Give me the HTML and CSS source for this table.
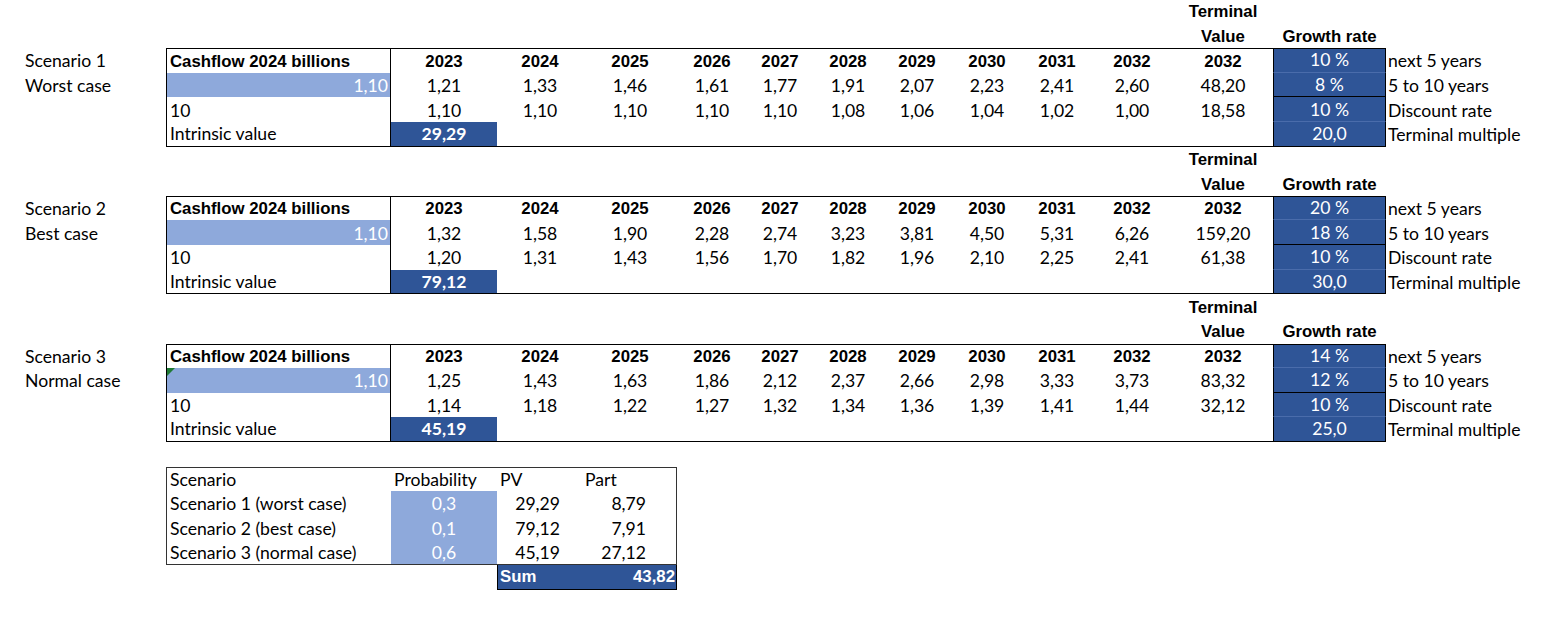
FILE: index.html
```html
<!DOCTYPE html>
<html>
<head>
<meta charset="utf-8">
<link rel="stylesheet" href="styles.css">
</head>
<body>
<div class="sheet">

  <!-- Scenario 1 -->
  <div class="row"><div class="c h ctr col-m">Terminal</div></div>
  <div class="row"><div class="c h ctr col-m">Value</div><div class="c h ctr">Growth rate</div></div>
  <div class="row">
    <div class="c lab">Scenario 1</div>
    <div class="c h pl top bl br">Cashflow 2024 billions</div>
    <div class="c h ctr top">2023</div><div class="c h ctr top">2024</div><div class="c h ctr top">2025</div><div class="c h ctr top">2026</div><div class="c h ctr top">2027</div><div class="c h ctr top">2028</div><div class="c h ctr top">2029</div><div class="c h ctr top">2030</div><div class="c h ctr top">2031</div><div class="c h ctr top">2032</div><div class="c h ctr top">2032</div>
    <div class="c ctr dark top bl br sep">10 %</div>
    <div class="c note">next 5 years</div>
  </div>
  <div class="row">
    <div class="c lab">Worst case</div>
    <div class="c rt light bl br">1,10</div>
    <div class="c ctr">1,21</div><div class="c ctr">1,33</div><div class="c ctr">1,46</div><div class="c ctr">1,61</div><div class="c ctr">1,77</div><div class="c ctr">1,91</div><div class="c ctr">2,07</div><div class="c ctr">2,23</div><div class="c ctr">2,41</div><div class="c ctr">2,60</div><div class="c ctr">48,20</div>
    <div class="c ctr dark bl br bot">8 %</div>
    <div class="c note">5 to 10 years</div>
  </div>
  <div class="row">
    <div class="c"></div>
    <div class="c pl bl br">10</div>
    <div class="c ctr">1,10</div><div class="c ctr">1,10</div><div class="c ctr">1,10</div><div class="c ctr">1,10</div><div class="c ctr">1,10</div><div class="c ctr">1,08</div><div class="c ctr">1,06</div><div class="c ctr">1,04</div><div class="c ctr">1,02</div><div class="c ctr">1,00</div><div class="c ctr">18,58</div>
    <div class="c ctr dark bl br sep">10 %</div>
    <div class="c note">Discount rate</div>
  </div>
  <div class="row">
    <div class="c"></div>
    <div class="c pl bl br bot">Intrinsic value</div>
    <div class="c ctr dark b bot">29,29</div>
    <div class="c bot"></div><div class="c bot"></div><div class="c bot"></div><div class="c bot"></div><div class="c bot"></div><div class="c bot"></div><div class="c bot"></div><div class="c bot"></div><div class="c bot"></div><div class="c bot"></div>
    <div class="c ctr dark bl br bot">20,0</div>
    <div class="c note">Terminal multiple</div>
  </div>

  <!-- Scenario 2 -->
  <div class="row"><div class="c h ctr col-m">Terminal</div></div>
  <div class="row"><div class="c h ctr col-m">Value</div><div class="c h ctr">Growth rate</div></div>
  <div class="row">
    <div class="c lab">Scenario 2</div>
    <div class="c h pl top bl br">Cashflow 2024 billions</div>
    <div class="c h ctr top">2023</div><div class="c h ctr top">2024</div><div class="c h ctr top">2025</div><div class="c h ctr top">2026</div><div class="c h ctr top">2027</div><div class="c h ctr top">2028</div><div class="c h ctr top">2029</div><div class="c h ctr top">2030</div><div class="c h ctr top">2031</div><div class="c h ctr top">2032</div><div class="c h ctr top">2032</div>
    <div class="c ctr dark top bl br sep">20 %</div>
    <div class="c note">next 5 years</div>
  </div>
  <div class="row">
    <div class="c lab">Best case</div>
    <div class="c rt light bl br">1,10</div>
    <div class="c ctr">1,32</div><div class="c ctr">1,58</div><div class="c ctr">1,90</div><div class="c ctr">2,28</div><div class="c ctr">2,74</div><div class="c ctr">3,23</div><div class="c ctr">3,81</div><div class="c ctr">4,50</div><div class="c ctr">5,31</div><div class="c ctr">6,26</div><div class="c ctr">159,20</div>
    <div class="c ctr dark bl br bot">18 %</div>
    <div class="c note">5 to 10 years</div>
  </div>
  <div class="row">
    <div class="c"></div>
    <div class="c pl bl br">10</div>
    <div class="c ctr">1,20</div><div class="c ctr">1,31</div><div class="c ctr">1,43</div><div class="c ctr">1,56</div><div class="c ctr">1,70</div><div class="c ctr">1,82</div><div class="c ctr">1,96</div><div class="c ctr">2,10</div><div class="c ctr">2,25</div><div class="c ctr">2,41</div><div class="c ctr">61,38</div>
    <div class="c ctr dark bl br sep">10 %</div>
    <div class="c note">Discount rate</div>
  </div>
  <div class="row">
    <div class="c"></div>
    <div class="c pl bl br bot">Intrinsic value</div>
    <div class="c ctr dark b bot">79,12</div>
    <div class="c bot"></div><div class="c bot"></div><div class="c bot"></div><div class="c bot"></div><div class="c bot"></div><div class="c bot"></div><div class="c bot"></div><div class="c bot"></div><div class="c bot"></div><div class="c bot"></div>
    <div class="c ctr dark bl br bot">30,0</div>
    <div class="c note">Terminal multiple</div>
  </div>

  <!-- Scenario 3 -->
  <div class="row"><div class="c h ctr col-m">Terminal</div></div>
  <div class="row"><div class="c h ctr col-m">Value</div><div class="c h ctr">Growth rate</div></div>
  <div class="row">
    <div class="c lab">Scenario 3</div>
    <div class="c h pl top bl br">Cashflow 2024 billions</div>
    <div class="c h ctr top">2023</div><div class="c h ctr top">2024</div><div class="c h ctr top">2025</div><div class="c h ctr top">2026</div><div class="c h ctr top">2027</div><div class="c h ctr top">2028</div><div class="c h ctr top">2029</div><div class="c h ctr top">2030</div><div class="c h ctr top">2031</div><div class="c h ctr top">2032</div><div class="c h ctr top">2032</div>
    <div class="c ctr dark top bl br sep">14 %</div>
    <div class="c note">next 5 years</div>
  </div>
  <div class="row">
    <div class="c lab">Normal case</div>
    <div class="c rt light bl br flag">1,10</div>
    <div class="c ctr">1,25</div><div class="c ctr">1,43</div><div class="c ctr">1,63</div><div class="c ctr">1,86</div><div class="c ctr">2,12</div><div class="c ctr">2,37</div><div class="c ctr">2,66</div><div class="c ctr">2,98</div><div class="c ctr">3,33</div><div class="c ctr">3,73</div><div class="c ctr">83,32</div>
    <div class="c ctr dark bl br bot">12 %</div>
    <div class="c note">5 to 10 years</div>
  </div>
  <div class="row">
    <div class="c"></div>
    <div class="c pl bl br">10</div>
    <div class="c ctr">1,14</div><div class="c ctr">1,18</div><div class="c ctr">1,22</div><div class="c ctr">1,27</div><div class="c ctr">1,32</div><div class="c ctr">1,34</div><div class="c ctr">1,36</div><div class="c ctr">1,39</div><div class="c ctr">1,41</div><div class="c ctr">1,44</div><div class="c ctr">32,12</div>
    <div class="c ctr dark bl br sep">10 %</div>
    <div class="c note">Discount rate</div>
  </div>
  <div class="row">
    <div class="c"></div>
    <div class="c pl bl br bot">Intrinsic value</div>
    <div class="c ctr dark b bot">45,19</div>
    <div class="c bot"></div><div class="c bot"></div><div class="c bot"></div><div class="c bot"></div><div class="c bot"></div><div class="c bot"></div><div class="c bot"></div><div class="c bot"></div><div class="c bot"></div><div class="c bot"></div>
    <div class="c ctr dark bl br bot">25,0</div>
    <div class="c note">Terminal multiple</div>
  </div>

  <!-- Summary -->
  <div class="row"></div>
  <div class="row">
    <div class="c"></div>
    <div class="c pl stop sleft">Scenario</div>
    <div class="c pl stop">Probability</div>
    <div class="c pv-h stop">PV</div>
    <div class="c part-h stop sright">Part</div>
  </div>
  <div class="row">
    <div class="c"></div>
    <div class="c pl sleft">Scenario 1 (worst case)</div>
    <div class="c ctr light">0,3</div>
    <div class="c rt pv">29,29</div>
    <div class="c rt part sright">8,79</div>
  </div>
  <div class="row">
    <div class="c"></div>
    <div class="c pl sleft">Scenario 2 (best case)</div>
    <div class="c ctr light">0,1</div>
    <div class="c rt pv">79,12</div>
    <div class="c rt part sright">7,91</div>
  </div>
  <div class="row">
    <div class="c"></div>
    <div class="c pl sleft sbot">Scenario 3 (normal case)</div>
    <div class="c ctr light sbot">0,6</div>
    <div class="c rt pv sbot">45,19</div>
    <div class="c rt part sright sbot">27,12</div>
  </div>
  <div class="row">
    <div class="c"></div>
    <div class="c"></div>
    <div class="c"></div>
    <div class="c h dark sum-l bl bot">Sum</div>
    <div class="c h rt dark sum-r br bot">43,82</div>
  </div>
</div>
</body>
</html>
```

FILE: styles.css
```css
html, body {
  margin: 0;
  padding: 0;
  background: #ffffff;
}

.sheet {
  margin-top: -1px;
  font-family: Lato, "Liberation Sans", sans-serif;
  font-size: 17.6px;
  color: #000000;
}

.row {
  display: grid;
  grid-template-columns: 166px 225px 106px 86px 94px 70px 66px 70px 68px 72px 68px 82px 100px 113px 1fr;
  height: 24.62px;
}

.c {
  box-sizing: border-box;
  display: flex;
  align-items: flex-end;
  justify-content: flex-start;
  white-space: nowrap;
  min-width: 0;
  padding-bottom: 1.5px;
  line-height: normal;
  position: relative;
}

.h {
  font-family: "Liberation Sans", Arial, sans-serif;
  font-weight: bold;
  font-size: 16.8px;
  padding-bottom: 1.2px;
}

.b {
  font-weight: bold;
}

.col-m {
  grid-column: 13;
}

.ctr {
  justify-content: center;
}

.rt {
  justify-content: flex-end;
  padding-right: 2px;
}

.pl {
  padding-left: 3px;
}

.lab {
  padding-left: 25px;
}

.note {
  padding-left: 2px;
}

.light {
  background: #8ea9db;
  color: #ffffff;
}

.dark {
  background: #2f5597;
  color: #ffffff;
}

.top {
  border-top: 1px solid #000000;
}

.bot {
  border-bottom: 1px solid #000000;
}

.bl {
  border-left: 1px solid #000000;
}

.br {
  border-right: 1px solid #000000;
}

.sep {
  border-bottom: 1px solid #4a6cab;
}

.flag::before {
  content: "";
  position: absolute;
  top: 0;
  left: 0;
  width: 0;
  height: 0;
  border-top: 8px solid #1f7a35;
  border-right: 8px solid transparent;
}

/* summary table */
.stop {
  border-top: 1px solid #333333;
}

.sbot {
  border-bottom: 1px solid #333333;
}

.sleft {
  border-left: 1px solid #333333;
}

.sright {
  border-right: 1px solid #333333;
}

.pv-h {
  padding-left: 3px;
}

.part-h {
  padding-left: 2px;
}

.pv {
  padding-right: 23px;
}

.part {
  padding-right: 30px;
}

.sum-l {
  padding-left: 2px;
}

.sum-r {
  padding-right: 1px;
}
```
